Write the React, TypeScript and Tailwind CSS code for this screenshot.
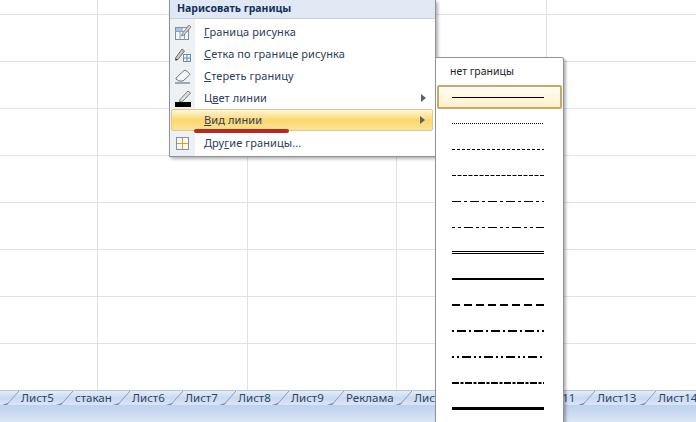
import React from 'react';

const FONT = "font-['Noto_Sans','DejaVu_Sans',sans-serif]";

const tabs = [
  { name: 'Лист4', w: 'w-[54px]' },
  { name: 'Лист5', w: 'w-[54px]' },
  { name: 'стакан', w: 'w-[57px]' },
  { name: 'Лист6', w: 'w-[53px]' },
  { name: 'Лист7', w: 'w-[53px]' },
  { name: 'Лист8', w: 'w-[53px]' },
  { name: 'Лист9', w: 'w-[55px]' },
  { name: 'Реклама', w: 'w-[68px]' },
  { name: 'Лист10', w: 'w-[61px]' },
  { name: 'Лист12', w: 'w-[61px]' },
  { name: 'Лист11', w: 'w-[61px]' },
  { name: 'Лист13', w: 'w-[61px]' },
  { name: 'Лист14', w: 'w-[61px]' },
];

// widths and dash patterns of the line styles, top to bottom
const lineStyles = [
  { sw: 1, dash: '' },
  { sw: 1, dash: '1 1' },
  { sw: 1, dash: '3 2' },
  { sw: 1, dash: '4 1.5' },
  { sw: 1, dash: '9 3 3 3' },
  { sw: 1, dash: '3 3 3 3 9 3' },
  { sw: 3, dash: '', double: true },
  { sw: 2, dash: '' },
  { sw: 2, dash: '8 4' },
  { sw: 2, dash: '2 3 9 3' },
  { sw: 2, dash: '2 3 2 3 9 3' },
  { sw: 2, dash: '7 1.5 3 1.5' },
  { sw: 3, dash: '' },
];

function Arrow({ hot }: { hot?: boolean }) {
  return (
    <svg width="5" height="8" viewBox="0 0 5 8" className={`absolute ${hot ? 'right-[7px]' : 'right-[9px]'}`}>
      <path d="M0 0 L5 4 L0 8 Z" fill="#59636e" />
    </svg>
  );
}

function IconDraw() {
  return (
    <svg width="16" height="17" viewBox="0 0 16 17">
      <rect x="0.5" y="3.5" width="13" height="12" fill="#f4f8fc" stroke="#7d8fa3" />
      <path d="M0 7.5H14M5 4V16M9.5 8V16" stroke="#8aa0b8" />
      <path d="M1 4h7v3H1z" fill="#a8c4de" />
      <path d="M7 10 L14 1 L16 3 L9 11 L6.5 12 Z" fill="#d8d4c8" stroke="#6c6f74" strokeWidth="0.8" />
    </svg>
  );
}

function IconGridPen() {
  return (
    <svg width="16" height="15" viewBox="0 0 16 15">
      <path d="M0.5 11 L7 2 L9.5 4 L3 12.5 L0.5 13 Z" fill="#c8c5bc" stroke="#55585c" strokeWidth="0.8" />
      <path d="M1 11.5 L2.5 13 L0.5 13.5 Z" fill="#222" />
      <rect x="8.5" y="7.5" width="7" height="7" fill="#eef4fa" stroke="#6f8aa5" />
      <path d="M12 8V14M9 11H15" stroke="#6f8aa5" />
    </svg>
  );
}

function IconEraser() {
  return (
    <svg width="16" height="15" viewBox="0 0 16 15">
      <path d="M1 9 L9 1.5 Q10 1 11 1.5 L14.5 4.5 Q15 5.5 14.5 6 L8 12 H4 L1 10 Z" fill="#f3f5f7" stroke="#6e767e" />
      <path d="M0 14H15" stroke="#55606a" />
    </svg>
  );
}

function IconColor() {
  return (
    <svg width="16" height="17" viewBox="0 0 16 17">
      <path d="M5 9.5 L13 1 L15.5 3 L8 11 L4.5 11.5 Z" fill="#e4e1d8" stroke="#5a5d60" strokeWidth="0.8" />
      <rect x="0" y="12" width="16" height="5" fill="#000" />
    </svg>
  );
}

function IconBorders() {
  return (
    <svg width="13" height="13" viewBox="0 0 13 13">
      <rect x="0.5" y="0.5" width="12" height="12" fill="#fdf6e3" stroke="#7a93ad" />
      <path d="M6.5 1V12M1 6.5H12" stroke="#c7a24e" />
    </svg>
  );
}

function MenuRow({ icon, first, rest, arrow, hot, h }: { icon?: React.ReactNode; first: React.ReactNode; rest: string; arrow?: boolean; hot?: boolean; h: string }) {
  return (
    <div className={`relative flex items-center ${h} ${hot ? 'mr-[2px] ml-px rounded-[2px] border border-[#e0c98a] bg-gradient-to-b from-[#fff6d8] via-[#fdd76c] to-[#fbe39a]' : ''}`}>
      <div className={`flex shrink-0 items-center justify-center ${hot ? 'w-[23px]' : 'w-[25px]'}`}>{icon}</div>
      <span className="ml-[9px] text-[11px] tracking-[0.1px] text-[#2c3d57]">
        {first}
        {rest}
      </span>
      {arrow && <Arrow hot={hot} />}
    </div>
  );
}

export default function App() {
  return (
    <div className={`relative flex h-[422px] w-[696px] flex-col overflow-hidden bg-white ${FONT}`}>
      {/* Ячейки листа */}
      <div className="relative h-[390px] overflow-hidden">
        <div className="-mt-[32px] grid grid-cols-[98px_150px_149px_150px_150px] auto-rows-[47px]">
          {Array.from({ length: 45 }).map((_, i) => (
            <div key={i} className="border-r border-b border-[#dde3ea]" />
          ))}
        </div>
      </div>

      {/* Ярлыки листов */}
      <div className="flex h-[15px] overflow-hidden border-t border-[#b4c6dc] bg-gradient-to-b from-[#e4edf8] via-[#c9daef] to-[#dbe6f4]">
        <div className="ml-[-33px] flex shrink-0">
          {tabs.map((t) => (
            <div key={t.name} className={`relative flex ${t.w} shrink-0 items-center`}>
              <span className="text-[11.5px] leading-none text-[#2d4468]">{t.name}</span>
              <svg width="18" height="14" viewBox="0 0 18 14" className="absolute right-[2px] top-0">
                <path d="M4 13.5H6 L18 0" fill="none" stroke="#8b9cb2" />
                <path d="M1 14H6L8 11.5Z" fill="#7d8ea6" />
              </svg>
            </div>
          ))}
        </div>
      </div>
      <div className="flex-1 bg-gradient-to-b from-[#bdd2ee] to-[#d9e5f5]" />

      {/* Меню границ */}
      <div className="absolute left-[169px] top-0 h-[157px] w-[267px] border-r border-b border-l border-[#8f9397] bg-white shadow-[2px_2px_3px_rgba(0,0,0,0.3)]">
        <div className="flex h-[19px] items-center border-b border-[#c5d0dc] bg-[#dfe8f3] pl-[7px] text-[10.5px] font-bold text-[#16305a]">
          Нарисовать границы
        </div>
        <div className="flex h-[137px] flex-col bg-gradient-to-r from-[#eef1f4] from-[25px] to-white to-[25px] pt-[2px]">
          <MenuRow h="h-[22px]" icon={<IconDraw />} first={<u>Г</u>} rest="раница рисунка" />
          <MenuRow h="h-[22px]" icon={<IconGridPen />} first={<u>С</u>} rest="етка по границе рисунка" />
          <MenuRow h="h-[22px]" icon={<IconEraser />} first={<u>С</u>} rest="тереть границу" />
          <MenuRow h="h-[22px]" icon={<IconColor />} first={<>Ц<u>в</u></>} rest="ет линии" arrow />
          <MenuRow h="h-[22px]" hot first={<u>В</u>} rest="ид линии" arrow />
          <MenuRow h="h-[25px]" icon={<IconBorders />} first={<>Дру<u>г</u></>} rest="ие границы..." />
        </div>
      </div>
      <div className="absolute left-[194px] top-[129px] h-[4px] w-[95px] rounded-full bg-[#b8281e]" />

      {/* Подменю вида линии */}
      <div className="absolute left-[435px] top-[57px] h-[380px] w-[129px] rounded-t-[2px] border border-[#8f9397] bg-white shadow-[2px_2px_3px_rgba(0,0,0,0.3)]">
        <div className="flex h-[27px] items-center pl-[14px] text-[10.5px] text-[#222]">нет границы</div>
        <div className="flex flex-col">
          {lineStyles.map((l, i) => (
            <div
              key={i}
              className={`flex items-center ${i === 0 ? 'mx-px mb-px h-[24px] rounded-[2px] border-2 border-[#c9a868] bg-gradient-to-b from-[#fffdf6] to-[#fff0c8] pl-[13px]' : 'h-[26px] pl-[16px]'} ${l.double ? '-mt-px' : ''}`}
            >
              <svg width="92" height="6" viewBox="0 0 92 6">
                {l.double ? (
                  <path d="M0 2.5H92M0 4.5H92" stroke="#000" strokeWidth="1" />
                ) : (
                  <path d={l.sw === 2 ? 'M0 4H92' : 'M0 3.5H92'} stroke="#000" strokeWidth={l.sw} strokeDasharray={l.dash} />
                )}
              </svg>
            </div>
          ))}
        </div>
      </div>
    </div>
  );
}
